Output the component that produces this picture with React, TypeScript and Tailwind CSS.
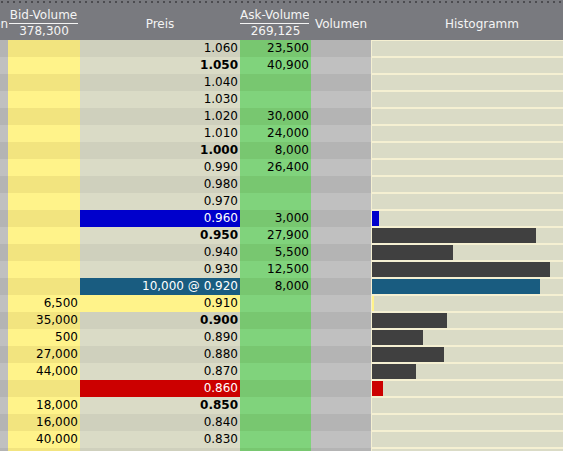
import React from "react";

type Row = {
  price: string;
  bid?: string;
  ask?: string;
  bold?: boolean;
  priceStyle?: "blue" | "teal" | "yellow" | "red";
  bar?: number;
  barColor?: string;
};

const rows: Row[] = [
  { price: "1.060", ask: "23,500" },
  { price: "1.050", ask: "40,900", bold: true },
  { price: "1.040" },
  { price: "1.030" },
  { price: "1.020", ask: "30,000" },
  { price: "1.010", ask: "24,000" },
  { price: "1.000", ask: "8,000", bold: true },
  { price: "0.990", ask: "26,400" },
  { price: "0.980" },
  { price: "0.970" },
  { price: "0.960", ask: "3,000", priceStyle: "blue", bar: 7, barColor: "#0000cc" },
  { price: "0.950", ask: "27,900", bold: true, bar: 164, barColor: "#404040" },
  { price: "0.940", ask: "5,500", bar: 81, barColor: "#404040" },
  { price: "0.930", ask: "12,500", bar: 178, barColor: "#404040" },
  { price: "10,000 @ 0.920", ask: "8,000", priceStyle: "teal", bar: 168, barColor: "#195c80" },
  { price: "0.910", bid: "6,500", priceStyle: "yellow", bar: 2, barColor: "#fff38a" },
  { price: "0.900", bid: "35,000", bold: true, bar: 75, barColor: "#404040" },
  { price: "0.890", bid: "500", bar: 51, barColor: "#404040" },
  { price: "0.880", bid: "27,000", bar: 72, barColor: "#404040" },
  { price: "0.870", bid: "44,000", bar: 44, barColor: "#404040" },
  { price: "0.860", priceStyle: "red", bar: 11, barColor: "#cc0000" },
  { price: "0.850", bid: "18,000", bold: true },
  { price: "0.840", bid: "16,000" },
  { price: "0.830", bid: "40,000" },
  { price: "" },
];

function priceClass(r: Row, even: boolean) {
  switch (r.priceStyle) {
    case "blue":
      return "bg-[#0000cc] text-white";
    case "teal":
      return "bg-[#195c80] text-white";
    case "yellow":
      return "bg-[#fff38a] text-black";
    case "red":
      return "bg-[#cc0000] text-white";
    default:
      return even ? "bg-[#cfd0bd] text-black" : "bg-[#dadbc6] text-black";
  }
}

export default function App() {
  const dots = Array.from({ length: 100 });
  return (
    <div
      className="w-[563px] h-[451px] overflow-hidden bg-[#f5f0d2] text-[12px]"
      style={{ fontFamily: '"DejaVu Sans", Verdana, sans-serif' }}
    >
      <div className="w-[593px]">
        {/* Header */}
        <div className="relative h-[40px] bg-[#797a7f] text-[#f4f4f4] flex">
          <div className="absolute left-0 top-[1px] flex gap-[4px] pl-[1px]">
            {dots.map((_, i) => (
              <span key={i} className="block w-[2px] h-[2px] bg-[#4c4c50]" />
            ))}
          </div>
          <div className="w-[8px] overflow-hidden flex justify-end pt-[17px] leading-[14px] whitespace-nowrap">
            <span>Volumen</span>
          </div>
          <div className="w-[72px] pt-[8px] text-center whitespace-nowrap">
            <div className="leading-[14px] pb-[1px] border-b border-[#f4f4f4] ml-[1px] mr-[2px]">Bid-Volume</div>
            <div className="leading-[14px]">378,300</div>
          </div>
          <div className="w-[160px] pt-[17px] leading-[14px] text-center">Preis</div>
          <div className="w-[71px] pt-[8px] text-center whitespace-nowrap overflow-hidden">
            <div className="leading-[14px] pb-[1px] border-b border-[#f4f4f4] mr-[2px] overflow-hidden">Ask-Volume</div>
            <div className="leading-[14px]">269,125</div>
          </div>
          <div className="w-[60px] pt-[17px] leading-[14px] text-center whitespace-nowrap">Volumen</div>
          <div className="w-[222px] pt-[17px] leading-[14px] text-center">Histogramm</div>
        </div>
        {/* Body */}
        {rows.map((r, i) => {
          const even = i % 2 === 0;
          return (
            <div key={i} className="flex h-[17px] leading-[17px] whitespace-nowrap">
              <div className={`w-[8px] ${even ? "bg-[#b4b4b4]" : "bg-[#c0c0c0]"}`} />
              <div className={`w-[72px] text-right pr-[2px] ${even ? "bg-[#f2e47f]" : "bg-[#fff38a]"}`}>
                {r.bid ?? ""}
              </div>
              <div className={`w-[160px] text-right pr-[2px] ${r.bold ? "font-bold" : ""} ${priceClass(r, even)}`}>
                {r.price}
              </div>
              <div className={`w-[71px] text-right pr-[2px] ${even ? "bg-[#78c770]" : "bg-[#80d37c]"}`}>
                {r.ask ?? ""}
              </div>
              <div className={`w-[60px] ${even ? "bg-[#b4b4b4]" : "bg-[#c0c0c0]"}`} />
              <div className="w-[222px] pl-[1px] py-[1px] bg-[#f5f0d2]">
                <div className="h-full bg-[#dadbc6] flex">
                  {r.bar ? (
                    <div className="h-full" style={{ width: r.bar, backgroundColor: r.barColor }} />
                  ) : null}
                </div>
              </div>
            </div>
          );
        })}
      </div>
    </div>
  );
}
